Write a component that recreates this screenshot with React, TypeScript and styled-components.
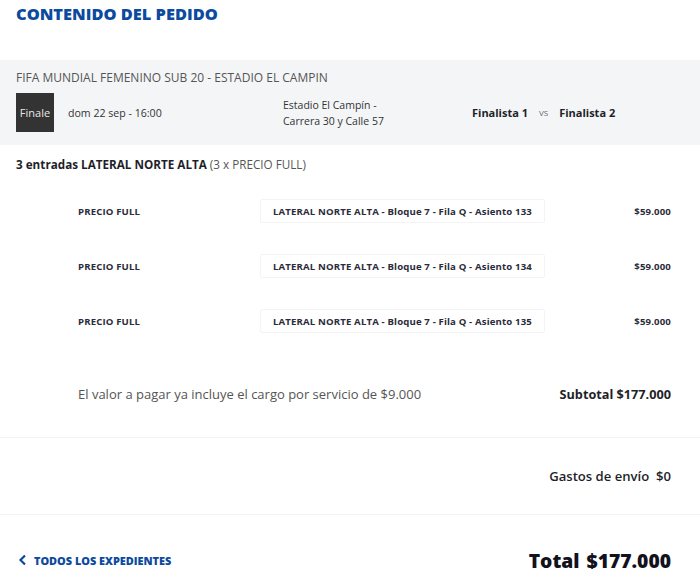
import styled, { createGlobalStyle } from 'styled-components'

const GlobalStyle = createGlobalStyle`
  body {
    margin: 0;
    background: #ffffff;
    font-family: "Open Sans", "Liberation Sans", sans-serif;
    color: #2b2b38;
  }
`

const Page = styled.div`
  width: 700px;
  height: 584px;
  overflow: hidden;
  background: #fff;
`

const Title = styled.h2`
  margin: 0;
  height: 60px;
  padding: 2px 16px 0;
  box-sizing: border-box;
  font-size: 16.4px;
  font-weight: 800;
  color: #0b4a9e;
`

const EventBand = styled.section`
  background: #f4f5f7;
  height: 85px;
  padding: 11px 16px 0;
  box-sizing: border-box;
`

const EventName = styled.div`
  font-size: 12px;
  color: #555;
  text-transform: uppercase;
  line-height: 14px;
`

const EventInfo = styled.div`
  display: flex;
  align-items: center;
  margin-top: 8px;
`

const StageBadge = styled.div`
  width: 38px;
  height: 39px;
  background: #333333;
  color: #e8e8e8;
  font-size: 11px;
  display: flex;
  align-items: center;
  justify-content: center;
`

const DateText = styled.div`
  margin-left: 14px;
  width: 215px;
  font-size: 10.6px;
  color: #333;
`

const Venue = styled.div`
  width: 189px;
  font-size: 10.5px;
  line-height: 16px;
  color: #333;
`

const Teams = styled.div`
  display: flex;
  align-items: center;
  font-size: 11px;
  font-weight: 700;
  color: #1f1f2a;
`

const Versus = styled.span`
  font-size: 8px;
  font-weight: 400;
  color: #666;
  margin: 0 11px 0 11px;
`

const TicketsHeader = styled.div`
  padding: 11px 16px 0;
  height: 38px;
  box-sizing: border-box;
  font-size: 11.7px;
  color: #1f1f2a;

  b {
    font-weight: 700;
  }

  span {
    color: #555;
  }
`

const TicketList = styled.div`
  display: flex;
  flex-direction: column;
  gap: 31px;
  padding-top: 16px;
`

const TicketRow = styled.div`
  display: flex;
  align-items: center;
  height: 24px;
  padding: 0 29px 0 78px;
`

const cellText = `
  font-size: 9.6px;
  font-weight: 700;
  color: #2b2b3a;
  letter-spacing: 0.15px;
`

const TicketType = styled.div`
  width: 182px;
  ${cellText}
`

const SeatBox = styled.div`
  width: 285px;
  height: 24px;
  box-sizing: border-box;
  border: 1px solid #f4f4f6;
  border-radius: 2px;
  display: flex;
  align-items: center;
  padding-left: 12px;
  ${cellText}
`

const Price = styled.div`
  flex: 1;
  text-align: right;
  ${cellText}
`

const SummaryRow = styled.div<{ $height: number; $top?: number }>`
  display: flex;
  align-items: center;
  justify-content: space-between;
  height: ${p => p.$height}px;
  padding: ${p => p.$top ?? 0}px 29px 0 78px;
  box-sizing: border-box;
`

const Note = styled.div`
  font-size: 13px;
  color: #555;
`

const Amount = styled.div<{ $weight?: number; $size?: number }>`
  font-size: ${p => p.$size ?? 12.7}px;
  font-weight: ${p => p.$weight ?? 700};
  color: #1f1f2a;
  margin-left: auto;
`

const Divider = styled.hr`
  margin: 0;
  border: none;
  border-top: 1px solid #f3f3f3;
`

const Footer = styled.div`
  display: flex;
  align-items: center;
  justify-content: space-between;
  height: 90px;
  padding: 0 29px 0 18px;
`

const BackLink = styled.a`
  display: flex;
  align-items: center;
  gap: 7px;
  color: #0b4a9e;
  font-size: 10.9px;
  font-weight: 800;
  text-decoration: none;
`

const Total = styled.div`
  font-size: 19.3px;
  font-weight: 800;
  color: #12121c;
  word-spacing: 2px;
`

const seats = [133, 134, 135]

const App = () => {
  return (
    <Page>
      <GlobalStyle />
      <Title>CONTENIDO DEL PEDIDO</Title>
      <EventBand>
        <EventName>FIFA Mundial Femenino Sub 20 - Estadio El Campin</EventName>
        <EventInfo>
          <StageBadge>Finale</StageBadge>
          <DateText>dom 22 sep - 16:00</DateText>
          <Venue>
            Estadio El Campín -<br />
            Carrera 30 y Calle 57
          </Venue>
          <Teams>
            Finalista 1<Versus>VS</Versus>Finalista 2
          </Teams>
        </EventInfo>
      </EventBand>
      <TicketsHeader>
        <b>3 entradas LATERAL NORTE ALTA</b> <span>(3 x PRECIO FULL)</span>
      </TicketsHeader>
      <TicketList>
        {seats.map(seat => (
          <TicketRow key={seat}>
            <TicketType>PRECIO FULL</TicketType>
            <SeatBox>LATERAL NORTE ALTA - Bloque 7 - Fila Q - Asiento {seat}</SeatBox>
            <Price>$59.000</Price>
          </TicketRow>
        ))}
      </TicketList>
      <SummaryRow $height={104} $top={18}>
        <Note>El valor a pagar ya incluye el cargo por servicio de $9.000</Note>
        <Amount>Subtotal $177.000</Amount>
      </SummaryRow>
      <Divider />
      <SummaryRow $height={76}>
        <Amount $weight={600} $size={13.1}>Gastos de envío&nbsp;&nbsp;$0</Amount>
      </SummaryRow>
      <Divider />
      <Footer>
        <BackLink href="#">
          <svg width="9" height="12" viewBox="0 0 9 12" fill="none">
            <path d="M7 1.5 2.5 6 7 10.5" stroke="#0b4a9e" strokeWidth="2.2" />
          </svg>
          TODOS LOS EXPEDIENTES
        </BackLink>
        <Total>Total $177.000</Total>
      </Footer>
    </Page>
  )
}

export default App
